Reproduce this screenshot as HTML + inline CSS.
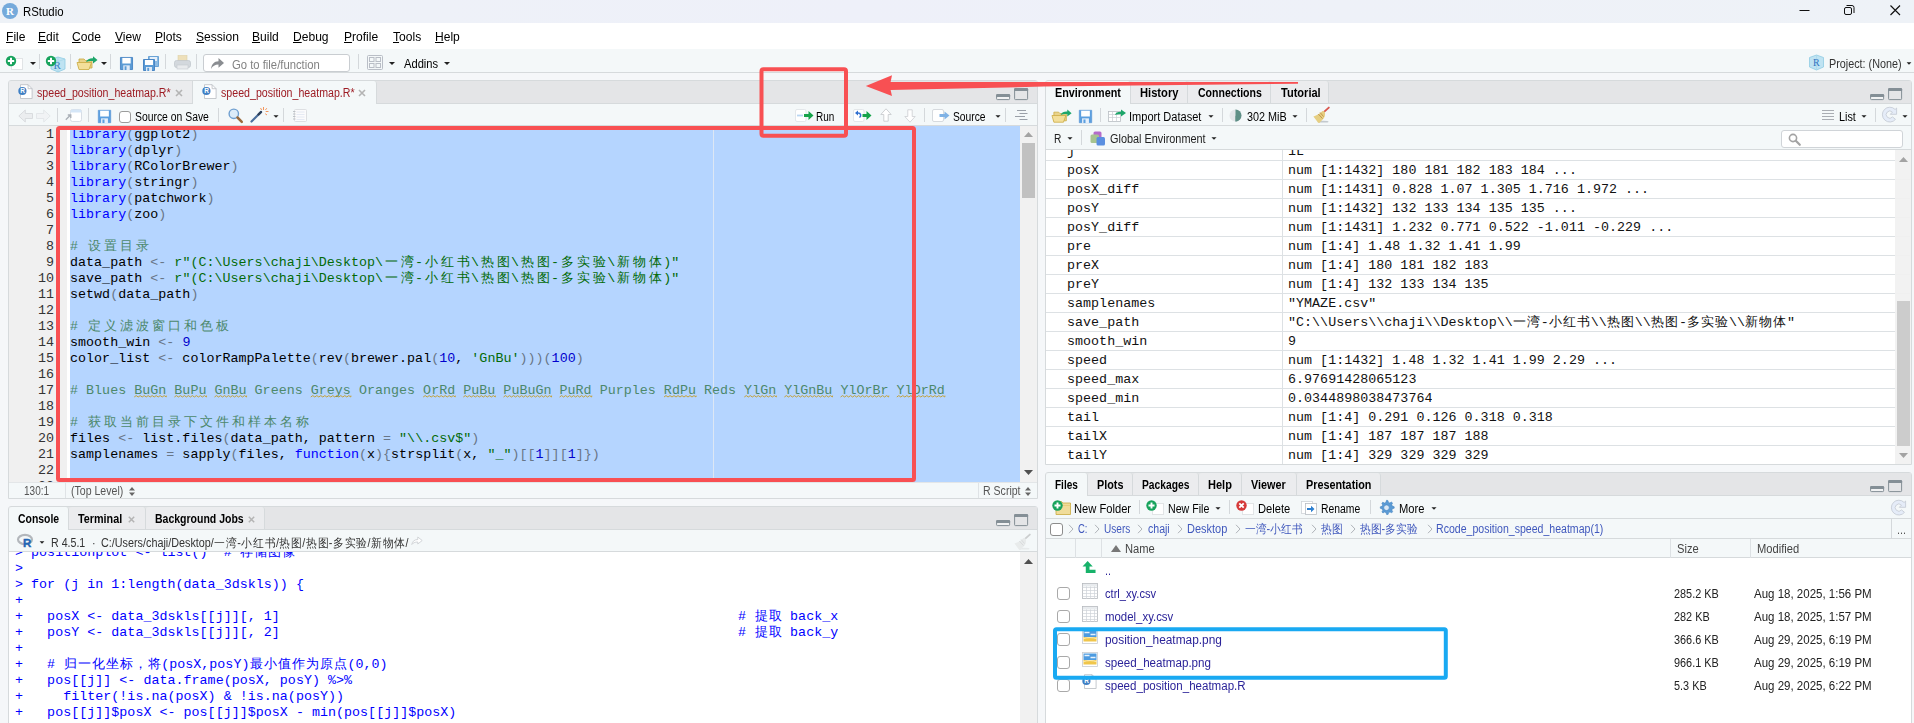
<!DOCTYPE html>
<html lang="en">
<head>
<meta charset="utf-8">
<title>RStudio</title>
<style>
*{box-sizing:border-box;margin:0;padding:0}
html,body{width:1914px;height:723px;overflow:hidden;background:#f5f7f9}
body{position:relative;font-family:"Liberation Sans",sans-serif;font-size:12px;color:#000}
.a{position:absolute}
.t{position:absolute;white-space:pre;font-family:"Liberation Sans",sans-serif;font-size:12px;line-height:14px;height:14px;transform-origin:0 50%;transform:scaleX(.9)}
.b{font-weight:700}
.m{font-size:13.33px;line-height:16px;height:16px;transform:scaleX(.905)}
.m u{text-decoration:underline;text-underline-offset:1px}
.sep{position:absolute;width:1px;background:#d4d8db}
.pane{position:absolute;background:#fff;border:1px solid #d6dadc;border-radius:3px 3px 0 0;overflow:hidden}
.tabbar{position:absolute;left:0;right:0;top:0;background:#e4e5e7;border-bottom:1px solid #d6dadc}
.tab{position:absolute;top:0;border-right:1px solid #d6dadc;background:#ebecee;border-radius:3px 3px 0 0}
.tab.on{background:#f4f8f9;border-bottom:0}
.tb{position:absolute;left:0;right:0;background:#f4f8f9;border-bottom:1px solid #d6dadc}
.code{position:absolute;font-family:"Liberation Mono",monospace;font-size:13.33px;line-height:16px;white-space:pre;color:#000;letter-spacing:.027px}
.code div{height:16px;overflow:hidden}
.c{font-style:normal;display:inline-block;width:16px;height:16px;line-height:16px;vertical-align:top;text-align:center;overflow:hidden;font-size:13px}
.c2{width:14px}.c4{width:12px;height:14px;line-height:14px;font-size:12px}.c3{width:13px;height:14px;line-height:14px;font-size:12px}
.k{color:#0000ff}.s{color:#036a07}.n{color:#0000cd}.o{color:#687687}.cm{color:#4c886b}
.ar{position:absolute;width:0;height:0;border-left:3px solid transparent;border-right:3px solid transparent;border-top:3.5px solid #222}
svg{position:absolute;overflow:visible}
</style>
</head>
<body>

<!-- ===== title bar ===== -->
<div class="a" style="left:0;top:0;width:1914px;height:23px;background:linear-gradient(90deg,#eef2f7,#eef0f9 45%,#eef1f8 70%,#eef2f7)"></div>
<div class="a" style="left:2px;top:3px;width:16px;height:16px;border-radius:50%;background:#75aadb"></div>
<div class="a" style="left:2px;top:3px;width:16px;height:16px;line-height:16px;text-align:center;color:#fff;font-family:'Liberation Serif',serif;font-size:11px;font-weight:700">R</div>
<div class="t" style="left:23px;top:5px;transform:scaleX(.95)">RStudio</div>
<svg style="left:1795px;top:0" width="119" height="23" viewBox="0 0 119 23" fill="none" stroke="#111" stroke-width="1">
<path d="M4.5 10.5h10"/>
<rect x="49.5" y="7.5" width="7" height="7" rx="1.5"/><path d="M51.5 5.5h5.5a2 2 0 0 1 2 2v5.5"/>
<path d="M95.5 5.5l9.5 9.5M105 5.5l-9.5 9.5" stroke-width="1.15"/>
</svg>

<!-- ===== menu bar ===== -->
<div class="a" style="left:0;top:23px;width:1914px;height:26px;background:#fff"></div>
<div class="t m" style="left:6px;top:29px"><u>F</u>ile</div>
<div class="t m" style="left:38px;top:29px"><u>E</u>dit</div>
<div class="t m" style="left:72px;top:29px"><u>C</u>ode</div>
<div class="t m" style="left:115px;top:29px"><u>V</u>iew</div>
<div class="t m" style="left:155px;top:29px"><u>P</u>lots</div>
<div class="t m" style="left:196px;top:29px"><u>S</u>ession</div>
<div class="t m" style="left:252px;top:29px"><u>B</u>uild</div>
<div class="t m" style="left:293px;top:29px"><u>D</u>ebug</div>
<div class="t m" style="left:344px;top:29px"><u>P</u>rofile</div>
<div class="t m" style="left:393px;top:29px"><u>T</u>ools</div>
<div class="t m" style="left:435px;top:29px"><u>H</u>elp</div>

<!-- ===== main toolbar ===== -->
<div class="a" style="left:0;top:49px;width:1914px;height:24px;background:#f4f8f9;border-bottom:1px solid #d6dadc"></div>
<!-- new file -->
<svg style="left:5px;top:55px" width="20" height="16" viewBox="0 0 20 16">
<rect x="6.5" y="3.5" width="11" height="11" fill="#fff" stroke="#e1e4e6"/>
<circle cx="6" cy="6" r="5.2" fill="#17a35c"/><path d="M6 2.8v6.4M2.8 6h6.4" stroke="#fff" stroke-width="2"/>
</svg>
<div class="ar" style="left:30px;top:62px"></div>
<div class="sep" style="left:39px;top:54px;height:15px"></div>
<!-- new project -->
<svg style="left:45px;top:55px" width="22" height="18" viewBox="0 0 22 18">
<path d="M6 4l7-2 7 2v10l-7 3-7-3z" fill="#bfe3f2" stroke="#8fcbe3" stroke-width=".8"/><path d="M13 2v15M6 4l7 2.5 7-2.5" stroke="#9fd3e8" stroke-width=".6" fill="none"/>
<text x="8.6" y="13.5" font-family="Liberation Serif" font-size="11" fill="#3b7fc4">R</text>
<circle cx="6" cy="6" r="5.2" fill="#17a35c"/><path d="M6 2.8v6.4M2.8 6h6.4" stroke="#fff" stroke-width="2"/>
</svg>
<div class="sep" style="left:70px;top:54px;height:15px"></div>
<!-- open folder -->
<svg style="left:76px;top:55px" width="24" height="16" viewBox="0 0 24 16">
<path d="M3 4h5l1.5 1.5H16V13H3z" fill="#e9d38a" stroke="#c9a93f" stroke-width=".8"/>
<path d="M1 7.5h14.5L13 14.5H3z" fill="#f3df9a" stroke="#c9a93f" stroke-width=".8"/>
<path d="M10 7c1-3 4-4 7-3.8V1.2L21.5 5 17 8.5V6c-2.5-.3-5 0-7 1z" fill="#1da66a"/>
</svg>
<div class="ar" style="left:101px;top:62px"></div>
<div class="sep" style="left:110px;top:54px;height:15px"></div>
<!-- save -->
<svg style="left:120px;top:57px" width="13" height="13" viewBox="0 0 14 14">
<path d="M.5.5h13v13H.5z" fill="#5b9bd5" stroke="#4a86c5"/><rect x="2.5" y="1" width="9" height="6" fill="#fff"/><rect x="3.5" y="9" width="7" height="5" fill="#dfeaf7"/><rect x="5" y="10" width="2" height="4" fill="#5b9bd5"/>
</svg>
<!-- save all -->
<svg style="left:143px;top:56px" width="17" height="15" viewBox="0 0 17 15">
<path d="M5.5.5h10v10h-10z" fill="#8dbbe3" stroke="#6aa3d6"/><rect x="7" y="1" width="7" height="4" fill="#e6f0fa"/>
<path d="M.5 3.5h11v11H.5z" fill="#5b9bd5" stroke="#4a86c5"/><rect x="2" y="4" width="8" height="5" fill="#fff"/><rect x="3" y="11" width="6" height="4" fill="#dfeaf7"/><rect x="4.3" y="11.8" width="1.8" height="3.2" fill="#5b9bd5"/>
</svg>
<div class="sep" style="left:165px;top:54px;height:15px"></div>
<!-- print (disabled) -->
<svg style="left:174px;top:55px" width="17" height="15" viewBox="0 0 17 15" opacity=".75">
<rect x="4" y=".5" width="9" height="6" fill="#ecd9a6" stroke="#d8c48c" stroke-width=".6"/>
<rect x=".5" y="5.5" width="16" height="7" rx="2" fill="#c9ced4" stroke="#aeb4bb" stroke-width=".7"/>
<rect x="3" y="10" width="11" height="4" fill="#e4e7ea" stroke="#b4bac0" stroke-width=".6"/>
</svg>
<div class="sep" style="left:196px;top:54px;height:15px"></div>
<!-- goto box -->
<div class="a" style="left:203px;top:54px;width:147px;height:18px;background:#fff;border:1px solid #c9cdd1;border-radius:3px"></div>
<svg style="left:210px;top:57px" width="15" height="13" viewBox="0 0 15 12" preserveAspectRatio="none"><path d="M1 11c.5-4 3-7 7.5-7V1L14 5.5 8.500 10V7C5 7 2.500 8.500 1 11z" fill="#8a8d91"/></svg>
<div class="t" style="left:232px;top:57.5px;color:#828282;transform:scaleX(.94)">Go to file/function</div>
<div class="sep" style="left:358px;top:54px;height:15px"></div>
<!-- grid icon -->
<svg style="left:367px;top:55px" width="16" height="15" viewBox="0 0 16 15" fill="none" stroke="#b9bec6">
<rect x=".5" y=".5" width="15" height="14" rx="1"/><rect x="2.500" y="2.500" width="4.500" height="4" /><rect x="9" y="2.500" width="4.500" height="4"/><rect x="2.500" y="8.500" width="4.500" height="4"/><rect x="9" y="8.500" width="4.500" height="4"/>
</svg>
<div class="ar" style="left:389px;top:62px"></div>
<div class="t" style="left:404px;top:57px;transform:scaleX(.93)">Addins</div>
<div class="ar" style="left:444px;top:62px"></div>
<!-- project -->
<svg style="left:1808px;top:54px" width="17" height="17" viewBox="0 0 17 17">
<path d="M1.500 3.500l7-2.500 7 2.500v9.500l-7 3-7-3z" fill="#bfe3f2" stroke="#8fcbe3" stroke-width=".8"/><path d="M8.500 1v15" stroke="#a5d6ea" stroke-width=".6"/>
<text x="5" y="12" font-family="Liberation Serif" font-size="10" fill="#2f74c0">R</text>
</svg>
<div class="t" style="left:1829px;top:57px;color:#333;transform:scaleX(.9)">Project: (None)</div>
<div class="ar" style="left:1906px;top:62px;transform:scale(.8)"></div>


<!-- ===== SOURCE PANE ===== -->
<div class="pane" style="left:8px;top:80px;width:1030px;height:419px"></div>
<div class="a" style="left:9px;top:81px;width:1028px;height:23px;background:#e4e5e7;border-bottom:1px solid #d6dadc"></div>
<div class="a" style="left:9px;top:81px;width:184px;height:22px;background:#ebecee;border-right:1px solid #d6dadc;border-radius:3px 0 0 0"></div>
<div class="a" style="left:193px;top:81px;width:184px;height:23px;background:#f4f8f9;border-right:1px solid #d6dadc;border-radius:0 3px 0 0"></div>
<!-- tab icons -->
<svg style="left:18px;top:84px" width="15" height="15" viewBox="0 0 15 15"><path d="M2.500.700h7.600l4 4v9.800H2.500z" fill="#fff" stroke="#b9bdc2" stroke-width=".8"/><path d="M10.100.700v4h4" fill="none" stroke="#b9bdc2" stroke-width=".8"/><circle cx="4.400" cy="7" r="4.100" fill="#3f7fc4"/><text x="2.300" y="9.300" font-family="Liberation Sans" font-weight="700" font-size="6.500" fill="#fff">R</text></svg>
<div class="t" style="left:37px;top:86px;color:#9d1c24;transform:scaleX(.886)">speed_position_heatmap.R*</div>
<svg style="left:175px;top:89px" width="8" height="8" viewBox="0 0 8 8"><path d="M1 1l6 6M7 1l-6 6" stroke="#b4b4b4" stroke-width="1.600"/></svg>
<svg style="left:202px;top:84px" width="15" height="15" viewBox="0 0 15 15"><path d="M2.500.700h7.600l4 4v9.800H2.500z" fill="#fff" stroke="#b9bdc2" stroke-width=".8"/><path d="M10.100.700v4h4" fill="none" stroke="#b9bdc2" stroke-width=".8"/><circle cx="4.400" cy="7" r="4.100" fill="#3f7fc4"/><text x="2.300" y="9.300" font-family="Liberation Sans" font-weight="700" font-size="6.500" fill="#fff">R</text></svg>
<div class="t" style="left:221px;top:86px;color:#9d1c24;transform:scaleX(.886)">speed_position_heatmap.R*</div>
<svg style="left:358px;top:89px" width="8" height="8" viewBox="0 0 8 8"><path d="M1 1l6 6M7 1l-6 6" stroke="#b4b4b4" stroke-width="1.600"/></svg>
<!-- min/max -->
<svg style="left:996px;top:88px" width="33" height="13" viewBox="0 0 33 13"><rect x=".6" y="6.600" width="13" height="5" rx=".8" fill="#f1f2f3" stroke="#848f96" stroke-width="1"/><path d="M.1 9V7.200a1.200 1.200 0 0 1 1.200-1.200h11.600a1.200 1.200 0 0 1 1.200 1.200V9z" fill="#848f96"/><rect x="18.600" y=".6" width="13" height="11" rx=".8" fill="none" stroke="#848f96" stroke-width="1"/><path d="M18.100 2.900V1.300a1.200 1.200 0 0 1 1.200-1.200h11.600a1.200 1.200 0 0 1 1.200 1.200V2.900z" fill="#848f96"/></svg>

<!-- editor toolbar -->
<div class="a" style="left:9px;top:104px;width:1028px;height:22px;background:#f4f8f9;border-bottom:1px solid #d6dadc"></div>
<svg style="left:18px;top:109px" width="33" height="14" viewBox="0 0 33 14"><path d="M.8 7l6.500-6v3.500h7.200v5H7.300V13z" fill="#ebedef" stroke="#d3d6d9" stroke-width=".8"/><path d="M32.200 7l-6.500-6v3.500h-7.200v5h7.200V13z" fill="#f1f3f5" stroke="#e0e3e6" stroke-width=".8"/></svg>
<div class="sep" style="left:57px;top:108px;height:14px"></div>
<svg style="left:65px;top:109px" width="17" height="13" viewBox="0 0 17 13"><rect x="5.500" y=".5" width="11" height="12" rx="2" fill="#fff" stroke="#cfd6de" stroke-width=".8"/><path d="M5.500 3.500V2.500a2 2 0 0 1 2-2h7a2 2 0 0 1 2 2v1z" fill="#d5e6f7"/><path d="M.8 10.800l4.500-4.500M2.800 6h3v3" fill="none" stroke="#a9afb6" stroke-width="1.300"/></svg>
<div class="sep" style="left:88px;top:108px;height:14px"></div>
<svg style="left:98px;top:110px" width="13" height="13" viewBox="0 0 14 14"><path d="M.3.3h13.400v13.400H.3z" fill="#5c9fdf" stroke="#4d8fd2" stroke-width=".6"/><rect x="2.300" y=".8" width="9.400" height="6.200" fill="#fff"/><rect x="3.300" y="9" width="7.400" height="5" fill="#e6f0fb"/><rect x="4.800" y="10.200" width="2.200" height="3.800" fill="#5c9fdf"/></svg>
<div class="a" style="left:119px;top:111px;width:12px;height:12px;background:#fff;border:1px solid #9c9c9c;border-radius:3px"></div>
<div class="t" style="left:135px;top:110px;transform:scaleX(.865)">Source on Save</div>
<div class="sep" style="left:218px;top:108px;height:14px"></div>
<svg style="left:228px;top:108px" width="15" height="15" viewBox="0 0 15 15"><circle cx="5.800" cy="5.800" r="4.700" fill="#dcecf9" stroke="#6f9fd0" stroke-width="1.400"/><path d="M9.500 9.500l4.300 4.300" stroke="#9a6a3c" stroke-width="2.500" stroke-linecap="round"/></svg>
<svg style="left:250px;top:107px" width="19" height="16" viewBox="0 0 19 16"><path d="M1.500 14.500L11 5" stroke="#4a6e9c" stroke-width="2.200" stroke-linecap="round"/><path d="M8.500 7.500L11 5" stroke="#2d3f58" stroke-width="2.400" stroke-linecap="round"/><path d="M13.500 0v3M10.500 1l1.200 2M16.800 1.200l-1.400 1.800M18.500 4.500h-2.800M17 8l-1.800-1.300" stroke="#f28a4b" stroke-width=".9"/></svg>
<div class="ar" style="left:273px;top:115px;transform:scale(.85)"></div>
<div class="sep" style="left:283px;top:108px;height:14px"></div>
<svg style="left:293px;top:109px" width="14" height="13" viewBox="0 0 14 13"><rect x="1.500" y=".5" width="12" height="12" rx="1" fill="#fbfbfc" stroke="#d5d8dc" stroke-width=".8"/><path d="M3.500 3h8M3.500 5.500h8M3.500 8h8M3.500 10.500h8" stroke="#dfe6f1" stroke-width=".8"/><path d="M0 2.500h2.500M0 5h2.500M0 7.500h2.500M0 10h2.500" stroke="#b9bdc3" stroke-width=".9"/></svg>
<!-- run group -->
<svg style="left:795px;top:109px" width="19" height="13" viewBox="0 0 19 13"><rect x=".5" y=".5" width="10.500" height="12" rx="1.500" fill="#fff" stroke="#dde1e5" stroke-width=".8"/><path d="M2 6.500h6" stroke="#b9d6f2" stroke-width="1.800"/><path d="M9 5h4.500V2L18.500 6.500 13.500 11V8H9z" fill="#16a34a"/></svg>
<div class="t" style="left:816px;top:110px;transform:scaleX(.83)">Run</div>
<svg style="left:853px;top:109px" width="19" height="13" viewBox="0 0 19 13"><rect x=".5" y=".5" width="10.500" height="12" rx="1.500" fill="#fff" stroke="#dde1e5" stroke-width=".8"/><path d="M6.500 8.500c2-1.500 1.500-4.500-1.500-4.500H3.500" fill="none" stroke="#2e6fd0" stroke-width="1.500"/><path d="M5 1.500L2 4l3 2.500z" fill="#2e6fd0"/><path d="M9.500 5h4V2L18.500 6.500 13.500 11V8h-4z" fill="#16a34a"/></svg>
<svg style="left:880px;top:108px" width="37" height="15" viewBox="0 0 37 15"><path d="M6 .8l5.200 5.700H8.200v6.700H3.800V6.500H.8z" fill="#fff" stroke="#c9cccf" stroke-width=".9"/><path d="M30 14.200l5.200-5.700h-3V1.800h-4.400v6.700h-3z" fill="#fff" stroke="#d0d3d6" stroke-width=".9"/></svg>
<div class="sep" style="left:924px;top:108px;height:14px"></div>
<svg style="left:932px;top:109px" width="18" height="13" viewBox="0 0 18 13"><rect x=".5" y=".5" width="11" height="12" rx="1.500" fill="#fff" stroke="#cdd1d5" stroke-width=".8"/><path d="M7.500 5h5V2.500L17.500 6.500 12.500 10.500V8h-5z" fill="#7fb2e5"/></svg>
<div class="t" style="left:953px;top:110px;transform:scaleX(.857)">Source</div>
<div class="ar" style="left:995px;top:115px;transform:scale(.85)"></div>
<div class="sep" style="left:1005px;top:108px;height:14px"></div>
<svg style="left:1015px;top:110px" width="13" height="10" viewBox="0 0 13 10"><path d="M2 .5h9M4.500 3.500h8M0 6.500h10M4.500 9.500h8" stroke="#9aa0a8" stroke-width="1"/></svg>
<!-- editor -->
<div class="a" style="left:9px;top:126px;width:1028px;height:356px;background:#fff;overflow:hidden">
<div class="a" style="left:0;top:0;width:58px;height:356px;background:#f0f0f0"></div>
<div class="a" style="left:61px;top:0;width:950px;height:356px;background:#b5d5ff"></div>
<div class="a" style="left:704px;top:0;width:1px;height:356px;background:#e4eaf2;opacity:.85"></div>
<div class="code" style="left:0;top:1px;width:45px;text-align:right;color:#333"><div>1</div><div>2</div><div>3</div><div>4</div><div>5</div><div>6</div><div>7</div><div>8</div><div>9</div><div>10</div><div>11</div><div>12</div><div>13</div><div>14</div><div>15</div><div>16</div><div>17</div><div>18</div><div>19</div><div>20</div><div>21</div><div>22</div><div>23</div></div>
<div class="code" style="left:61px;top:1px"><div><span class="k">library</span><span class="o">(</span>ggplot2<span class="o">)</span></div><div><span class="k">library</span><span class="o">(</span>dplyr<span class="o">)</span></div><div><span class="k">library</span><span class="o">(</span>RColorBrewer<span class="o">)</span></div><div><span class="k">library</span><span class="o">(</span>stringr<span class="o">)</span></div><div><span class="k">library</span><span class="o">(</span>patchwork<span class="o">)</span></div><div><span class="k">library</span><span class="o">(</span>zoo<span class="o">)</span></div><div></div><div><span class="cm"># <i class="c">设</i><i class="c">置</i><i class="c">目</i><i class="c">录</i></span></div><div>data_path <span class="o">&lt;-</span> <span class="s">r"(C:\Users\chaji\Desktop\<i class="c">一</i><i class="c">湾</i>-<i class="c">小</i><i class="c">红</i><i class="c">书</i>\<i class="c">热</i><i class="c">图</i>\<i class="c">热</i><i class="c">图</i>-<i class="c">多</i><i class="c">实</i><i class="c">验</i>\<i class="c">新</i><i class="c">物</i><i class="c">体</i>)"</span></div><div>save_path <span class="o">&lt;-</span> <span class="s">r"(C:\Users\chaji\Desktop\<i class="c">一</i><i class="c">湾</i>-<i class="c">小</i><i class="c">红</i><i class="c">书</i>\<i class="c">热</i><i class="c">图</i>\<i class="c">热</i><i class="c">图</i>-<i class="c">多</i><i class="c">实</i><i class="c">验</i>\<i class="c">新</i><i class="c">物</i><i class="c">体</i>)"</span></div><div>setwd<span class="o">(</span>data_path<span class="o">)</span></div><div></div><div><span class="cm"># <i class="c">定</i><i class="c">义</i><i class="c">滤</i><i class="c">波</i><i class="c">窗</i><i class="c">口</i><i class="c">和</i><i class="c">色</i><i class="c">板</i></span></div><div>smooth_win <span class="o">&lt;-</span> <span class="n">9</span></div><div>color_list <span class="o">&lt;-</span> colorRampPalette<span class="o">(</span>rev<span class="o">(</span>brewer.pal<span class="o">(</span><span class="n">10</span>, <span class="s">'GnBu'</span><span class="o">)))(</span><span class="n">100</span><span class="o">)</span></div><div></div><div><span class="cm"># Blues BuGn BuPu GnBu Greens Greys Oranges OrRd PuBu PuBuGn PuRd Purples RdPu Reds YlGn YlGnBu YlOrBr YlOrRd</span></div><div></div><div><span class="cm"># <i class="c">获</i><i class="c">取</i><i class="c">当</i><i class="c">前</i><i class="c">目</i><i class="c">录</i><i class="c">下</i><i class="c">文</i><i class="c">件</i><i class="c">和</i><i class="c">样</i><i class="c">本</i><i class="c">名</i><i class="c">称</i></span></div><div>files <span class="o">&lt;-</span> list.files<span class="o">(</span>data_path, pattern <span class="o">=</span> <span class="s">"\\.csv$"</span><span class="o">)</span></div><div>samplenames <span class="o">=</span> sapply<span class="o">(</span>files, <span class="k">function</span><span class="o">(</span>x<span class="o">){</span>strsplit<span class="o">(</span>x, <span class="s">"_"</span><span class="o">)[[</span><span class="n">1</span><span class="o">]][</span><span class="n">1</span><span class="o">]})</span></div><div></div><div></div></div>
<svg style="left:0;top:0" width="1028" height="356" viewBox="0 0 1028 356"><path d="M125.2 271L127.2 269.6L129.2 271L131.2 269.6L133.2 271L135.2 269.6L137.2 271L139.2 269.6L141.2 271L143.2 269.6L145.2 271L147.2 269.6L149.2 271L151.2 269.6L153.2 271L155.2 269.6L157.2 271L157.3 269.6M165.4 271L167.4 269.6L169.4 271L171.4 269.6L173.4 271L175.4 269.6L177.4 271L179.4 269.6L181.4 271L183.4 269.6L185.4 271L187.4 269.6L189.4 271L191.4 269.6L193.4 271L195.4 269.6L197.4 271L197.5 269.6M205.5 271L207.5 269.6L209.5 271L211.5 269.6L213.5 271L215.5 269.6L217.5 271L219.5 269.6L221.5 271L223.5 269.6L225.5 271L227.5 269.6L229.5 271L231.5 269.6L233.5 271L235.5 269.6L237.5 271L237.6 269.6M301.8 271L303.8 269.6L305.8 271L307.8 269.6L309.8 271L311.8 269.6L313.8 271L315.8 269.6L317.8 271L319.8 269.6L321.8 271L323.8 269.6L325.8 271L327.8 269.6L329.8 271L331.8 269.6L333.8 271L335.8 269.6L337.8 271L339.8 269.6L341.8 271L341.9 269.6M414.2 271L416.2 269.6L418.2 271L420.2 269.6L422.2 271L424.2 269.6L426.2 271L428.2 269.6L430.2 271L432.2 269.6L434.2 271L436.2 269.6L438.2 271L440.2 269.6L442.2 271L444.2 269.6L446.2 271L446.3 269.6M454.3 271L456.3 269.6L458.3 271L460.3 269.6L462.3 271L464.3 269.6L466.3 271L468.3 269.6L470.3 271L472.3 269.6L474.3 271L476.3 269.6L478.3 271L480.3 269.6L482.3 271L484.3 269.6L486.3 271L486.4 269.6M494.5 271L496.5 269.6L498.5 271L500.5 269.6L502.5 271L504.5 269.6L506.5 271L508.5 269.6L510.5 271L512.5 269.6L514.5 271L516.5 269.6L518.5 271L520.5 269.6L522.5 271L524.5 269.6L526.5 271L528.5 269.6L530.5 271L532.5 269.6L534.5 271L536.5 269.6L538.5 271L540.5 269.6L542.5 271L542.6 269.6M550.6 271L552.6 269.6L554.6 271L556.6 269.6L558.6 271L560.6 269.6L562.6 271L564.6 269.6L566.6 271L568.6 269.6L570.6 271L572.6 269.6L574.6 271L576.6 269.6L578.6 271L580.6 269.6L582.6 271L582.8 269.6M655.0 271L657.0 269.6L659.0 271L661.0 269.6L663.0 271L665.0 269.6L667.0 271L669.0 269.6L671.0 271L673.0 269.6L675.0 271L677.0 269.6L679.0 271L681.0 269.6L683.0 271L685.0 269.6L687.0 271L687.1 269.6M735.3 271L737.3 269.6L739.3 271L741.3 269.6L743.3 271L745.3 269.6L747.3 271L749.3 269.6L751.3 271L753.3 269.6L755.3 271L757.3 269.6L759.3 271L761.3 269.6L763.3 271L765.3 269.6L767.3 271L767.4 269.6M775.4 271L777.4 269.6L779.4 271L781.4 269.6L783.4 271L785.4 269.6L787.4 271L789.4 269.6L791.4 271L793.4 269.6L795.4 271L797.4 269.6L799.4 271L801.4 269.6L803.4 271L805.4 269.6L807.4 271L809.4 269.6L811.4 271L813.4 269.6L815.4 271L817.4 269.6L819.4 271L821.4 269.6L823.4 271L823.6 269.6M831.6 271L833.6 269.6L835.6 271L837.6 269.6L839.6 271L841.6 269.6L843.6 271L845.6 269.6L847.6 271L849.6 269.6L851.6 271L853.6 269.6L855.6 271L857.6 269.6L859.6 271L861.6 269.6L863.6 271L865.6 269.6L867.6 271L869.6 269.6L871.6 271L873.6 269.6L875.6 271L877.6 269.6L879.6 271L879.8 269.6M887.8 271L889.8 269.6L891.8 271L893.8 269.6L895.8 271L897.8 269.6L899.8 271L901.8 269.6L903.8 271L905.8 269.6L907.8 271L909.8 269.6L911.8 271L913.8 269.6L915.8 271L917.8 269.6L919.8 271L921.8 269.6L923.8 271L925.8 269.6L927.8 271L929.8 269.6L931.8 271L933.8 269.6L935.8 271L935.9 269.6" fill="none" stroke="#c4a23a" stroke-width="1" stroke-linejoin="round"/></svg>
<div class="a" style="left:1011px;top:0;width:17px;height:356px;background:#f1f1f1"></div>
<div class="a" style="left:1013px;top:17px;width:13px;height:55px;background:#c1c1c1"></div>
<svg style="left:1015px;top:6px" width="9" height="5" viewBox="0 0 9 5"><path d="M0 5L4.500 0 9 5z" fill="#a3a3a3"/></svg>
<svg style="left:1015px;top:344px" width="9" height="5" viewBox="0 0 9 5"><path d="M0 0L4.500 5 9 0z" fill="#505050"/></svg>
</div>
<div class="a" style="left:9px;top:482px;width:1028px;height:16px;background:#f4f8f9;border-top:1px solid #e3e6e8"></div>
<div class="t" style="left:24px;top:484px;color:#555;transform:scaleX(.835)">130:1</div>
<div class="sep" style="left:65px;top:483px;height:15px;background:#dfe3e6"></div>
<div class="t" style="left:71px;top:484px;color:#555;transform:scaleX(.88)">(Top Level)</div>
<svg style="left:129px;top:487px" width="6" height="9" viewBox="0 0 6 9"><path d="M0 3.500L3 0l3 3.500zM0 5.500L3 9l3-3.500z" fill="#666"/></svg>
<div class="sep" style="left:978px;top:483px;height:15px;background:#dfe3e6"></div>
<div class="t" style="left:983px;top:484px;color:#555;transform:scaleX(.88)">R Script</div>
<svg style="left:1025px;top:487px" width="6" height="9" viewBox="0 0 6 9"><path d="M0 3.500L3 0l3 3.500zM0 5.500L3 9l3-3.500z" fill="#666"/></svg>
<!-- ===== CONSOLE PANE ===== -->
<div class="pane" style="left:8px;top:506px;width:1030px;height:230px"></div>
<div class="a" style="left:9px;top:507px;width:1028px;height:23px;background:#e4e5e7;border-bottom:1px solid #d6dadc"></div>
<div class="a" style="left:9px;top:507px;width:60px;height:24px;background:#f4f8f9;border-right:1px solid #d6dadc;border-radius:3px 3px 0 0"></div>
<div class="a" style="left:69px;top:507px;width:77px;height:22px;background:#ebecee;border-right:1px solid #d6dadc;border-radius:3px 3px 0 0"></div>
<div class="a" style="left:146px;top:507px;width:119px;height:22px;background:#ebecee;border-right:1px solid #d6dadc;border-radius:3px 3px 0 0"></div>
<div class="t b" style="left:18px;top:512px;transform:scaleX(.868)">Console</div>
<div class="t b" style="left:78px;top:512px;transform:scaleX(.9)">Terminal</div>
<svg style="left:128px;top:516px" width="7" height="7" viewBox="0 0 7 7"><path d="M.8.8l5.400 5.400M6.200.8L.8 6.200" stroke="#b4b4b4" stroke-width="1.500"/></svg>
<div class="t b" style="left:155px;top:512px;transform:scaleX(.875)">Background Jobs</div>
<svg style="left:248px;top:516px" width="7" height="7" viewBox="0 0 7 7"><path d="M.8.8l5.400 5.400M6.200.8L.8 6.200" stroke="#b4b4b4" stroke-width="1.500"/></svg>
<svg style="left:996px;top:514px" width="33" height="13" viewBox="0 0 33 13"><rect x=".6" y="6.600" width="13" height="5" rx=".8" fill="#f1f2f3" stroke="#848f96" stroke-width="1"/><path d="M.1 9V7.200a1.200 1.200 0 0 1 1.200-1.200h11.600a1.200 1.200 0 0 1 1.200 1.200V9z" fill="#848f96"/><rect x="18.600" y=".6" width="13" height="11" rx=".8" fill="none" stroke="#848f96" stroke-width="1"/><path d="M18.100 2.900V1.300a1.200 1.200 0 0 1 1.200-1.200h11.600a1.200 1.200 0 0 1 1.200 1.200V2.900z" fill="#848f96"/></svg>
<div class="a" style="left:9px;top:530px;width:1028px;height:22px;background:#f4f8f9;border-bottom:1px solid #d6dadc"></div>
<svg style="left:17px;top:534px" width="18" height="14" viewBox="0 0 18 14"><ellipse cx="8" cy="5.500" rx="7" ry="4.600" fill="none" stroke="#b3b7bc" stroke-width="2.200"/><text x="6" y="13.200" font-family="Liberation Sans" font-weight="700" font-size="11.500" fill="#2265b5" stroke="#2265b5" stroke-width=".4">R</text></svg>
<div class="ar" style="left:39px;top:541px;transform:scale(.8)"></div>
<div class="t" style="left:51px;top:536px;color:#333;transform:scaleX(.886)">R 4.5.1</div>
<div class="t" style="left:92px;top:536px;color:#333">·</div>
<div class="t s2" style="left:101px;top:536px;color:#333;transform:scaleX(.9)">C:/Users/chaji/Desktop/<i class="c c3">一</i><i class="c c3">湾</i>-<i class="c c3">小</i><i class="c c3">红</i><i class="c c3">书</i>/<i class="c c3">热</i><i class="c c3">图</i>/<i class="c c3">热</i><i class="c c3">图</i>-<i class="c c3">多</i><i class="c c3">实</i><i class="c c3">验</i>/<i class="c c3">新</i><i class="c c3">物</i><i class="c c3">体</i>/</div>
<svg style="left:411px;top:536px" width="12" height="9" viewBox="0 0 12 9"><path d="M.8 8.500c.5-3 2.500-5 6-5V1L11.200 4.500 6.800 8V6C4 6 2 6.800.8 8.500z" fill="#fff" stroke="#cdd0d4" stroke-width=".9"/></svg>
<svg style="left:1007px;top:529px;filter:grayscale(1)" width="30" height="26" viewBox="0 0 30 26" opacity=".3"><ellipse cx="17" cy="19.700" rx="5.500" ry=".9" fill="#9aa3ab" opacity=".55"/><path d="M22.800 5.600L18.300 9.600" stroke="#d9564f" stroke-width="1.900" stroke-linecap="round"/><path d="M16.200 9.200c1.200-.6 2.600.2 2.800 1.600.3 2-.2 4-1.200 5.400L13.300 20.900c-.5.2-1-.2-1.500-.7L7.400 14.600c3.500-1.200 6.800-3.200 8.800-5.400z" fill="#e6cf82"/><path d="M14 10.400l3.600 4.200M12.300 12l4.200 4.600" stroke="#b98a3c" stroke-width=".8"/></svg>
<div class="a" style="left:9px;top:552px;width:1028px;height:171px;background:#fff;overflow:hidden">
<div class="code" style="left:6px;top:-7px;color:#0000ff"><div>&gt; positionplot &lt;- list()  # <i class="c c2">存</i><i class="c c2">储</i><i class="c c2">图</i><i class="c c2">像</i></div><div>&gt; </div><div>&gt; for (j in 1:length(data_3dskls)) {</div><div>+ </div><div>+   posX &lt;- data_3dskls[[j]][, 1]</div><div>+   posY &lt;- data_3dskls[[j]][, 2]</div><div>+ </div><div>+   # <i class="c c2">归</i><i class="c c2">一</i><i class="c c2">化</i><i class="c c2">坐</i><i class="c c2">标</i><i class="c c2">，</i><i class="c c2">将</i>(posX,posY)<i class="c c2">最</i><i class="c c2">小</i><i class="c c2">值</i><i class="c c2">作</i><i class="c c2">为</i><i class="c c2">原</i><i class="c c2">点</i>(0,0)</div><div>+   pos[[j]] &lt;- data.frame(posX, posY) %&gt;%</div><div>+     filter(!is.na(posX) &amp; !is.na(posY))</div><div>+   pos[[j]]$posX &lt;- pos[[j]]$posX - min(pos[[j]]$posX)</div><div>+   pos[[j]]$posY &lt;- pos[[j]]$posY - min(pos[[j]]$posY)</div></div>
<div class="code" style="left:729px;top:57px;color:#0000ff"><div># <i class="c c2">提</i><i class="c c2">取</i> back_x</div><div># <i class="c c2">提</i><i class="c c2">取</i> back_y</div></div>
<div class="a" style="left:1011px;top:0;width:17px;height:171px;background:#f1f1f1"></div>
<svg style="left:1015px;top:7px" width="9" height="5" viewBox="0 0 9 5"><path d="M0 5L4.500 0 9 5z" fill="#505050"/></svg>
</div>
<!-- ===== ENVIRONMENT PANE ===== -->
<div class="pane" style="left:1045px;top:80px;width:867px;height:385px"></div>
<div class="a" style="left:1046px;top:81px;width:865px;height:23px;background:#e4e5e7;border-bottom:1px solid #d6dadc"></div>
<div class="a" style="left:1046px;top:81px;width:85px;height:23px;background:#f4f8f9;border-right:1px solid #d6dadc;border-radius:3px 3px 0 0"></div>
<div class="t b" style="left:1055px;top:86px;transform:scaleX(0.898)">Environment</div>
<div class="a" style="left:1131px;top:81px;width:57px;height:22px;background:#ebecee;border-right:1px solid #d6dadc;border-radius:3px 3px 0 0"></div>
<div class="t b" style="left:1140px;top:86px;transform:scaleX(0.93)">History</div>
<div class="a" style="left:1188px;top:81px;width:83px;height:22px;background:#ebecee;border-right:1px solid #d6dadc;border-radius:3px 3px 0 0"></div>
<div class="t b" style="left:1197.5px;top:86px;transform:scaleX(0.878)">Connections</div>
<div class="a" style="left:1271px;top:81px;width:58px;height:22px;background:#ebecee;border-right:1px solid #d6dadc;border-radius:3px 3px 0 0"></div>
<div class="t b" style="left:1280.5px;top:86px;transform:scaleX(0.92)">Tutorial</div>
<svg style="left:1870px;top:88px" width="33" height="13" viewBox="0 0 33 13"><rect x=".6" y="6.600" width="13" height="5" rx=".8" fill="#f1f2f3" stroke="#848f96" stroke-width="1"/><path d="M.1 9V7.200a1.200 1.200 0 0 1 1.200-1.200h11.600a1.200 1.200 0 0 1 1.200 1.200V9z" fill="#848f96"/><rect x="18.600" y=".6" width="13" height="11" rx=".8" fill="none" stroke="#848f96" stroke-width="1"/><path d="M18.100 2.900V1.300a1.200 1.200 0 0 1 1.200-1.200h11.600a1.200 1.200 0 0 1 1.200 1.200V2.900z" fill="#848f96"/></svg>
<div class="a" style="left:1046px;top:104px;width:865px;height:22px;background:#f4f8f9;border-bottom:1px solid #d6dadc"></div>
<svg style="left:1051px;top:108px" width="23" height="16" viewBox="0 0 24 16"><path d="M3 4h5l1.500 1.500H16V13H3z" fill="#e9d38a" stroke="#c9a93f" stroke-width=".8"/><path d="M1 7.500h14.500L13 14.500H3z" fill="#f3df9a" stroke="#c9a93f" stroke-width=".8"/><path d="M10 7c1-3 4-4 7-3.800V1.200L21.500 5 17 8.500V6c-2.500-.3-5 0-7 1z" fill="#1da66a"/></svg>
<svg style="left:1079px;top:110px" width="13" height="13" viewBox="0 0 14 14"><path d="M.3.3h13.400v13.400H.3z" fill="#5c9fdf" stroke="#4d8fd2" stroke-width=".6"/><rect x="2.300" y=".8" width="9.400" height="6.200" fill="#fff"/><rect x="3.300" y="9" width="7.400" height="5" fill="#e6f0fb"/><rect x="4.800" y="10.200" width="2.200" height="3.800" fill="#5c9fdf"/></svg>
<div class="sep" style="left:1100px;top:108px;height:14px"></div>
<svg style="left:1108px;top:109px" width="19" height="13" viewBox="0 0 19 13"><rect x=".5" y="2.500" width="12" height="10" fill="#fff" stroke="#b9bdc3" stroke-width=".8"/><path d="M.5 5.500h12M.5 8.500h12M4.500 2.500v10M8.500 2.500v10" stroke="#c9cdd2" stroke-width=".7"/><path d="M7 6c.8-2.500 3-3.500 6-3.300V.5L18 4l-5 3.500V5.300C10.500 5 8.500 5.300 7 6z" fill="#1da66a"/></svg>
<div class="t" style="left:1129px;top:110px;transform:scaleX(.92)">Import Dataset</div>
<div class="ar" style="left:1208px;top:115px;transform:scale(.85)"></div>
<div class="sep" style="left:1222px;top:108px;height:14px"></div>
<svg style="left:1229px;top:109px" width="13" height="13" viewBox="0 0 13 13"><circle cx="6.500" cy="6.500" r="6" fill="#e3e6e9"/><path d="M6.500 6.500V.5a6 6 0 0 1 0 12z" fill="#5e8f86"/><path d="M6.500 6.500v6a6 6 0 0 0 3-0.800z" fill="#5e8f86"/></svg>
<div class="t" style="left:1247px;top:110px;transform:scaleX(.9)">302 MiB</div>
<div class="ar" style="left:1292px;top:115px;transform:scale(.85)"></div>
<div class="sep" style="left:1306px;top:108px;height:14px"></div>
<svg style="left:1306px;top:102px" width="30" height="26" viewBox="0 0 30 26"><ellipse cx="17" cy="19.700" rx="5.500" ry=".9" fill="#9aa3ab" opacity=".55"/><path d="M22.800 5.600L18.300 9.600" stroke="#d9564f" stroke-width="1.900" stroke-linecap="round"/><path d="M16.200 9.200c1.200-.6 2.600.2 2.800 1.600.3 2-.2 4-1.200 5.400L13.300 20.900c-.5.2-1-.2-1.500-.7L7.400 14.600c3.500-1.200 6.800-3.200 8.800-5.400z" fill="#e6cf82"/><path d="M14 10.400l3.600 4.200M12.300 12l4.200 4.600" stroke="#b98a3c" stroke-width=".8"/></svg>
<svg style="left:1822px;top:110px" width="12" height="11" viewBox="0 0 12 11"><path d="M0 .5h12M0 3.500h12M0 6.500h12M0 9.500h12" stroke="#a9adb3" stroke-width="1"/></svg>
<div class="t" style="left:1839px;top:110px;transform:scaleX(.9)">List</div>
<div class="ar" style="left:1861px;top:115px;transform:scale(.85)"></div>
<div class="sep" style="left:1875px;top:108px;height:14px"></div>
<svg style="left:1876px;top:104px" width="36" height="24" viewBox="0 0 36 24"><path d="M20.600 4V10.300H14.300L16.450 8.160A3.600 3.600 0 1 0 16.560 12.910L19.470 15.360A7.400 7.400 0 1 1 19.120 5.460Z" fill="#e5ecf8" stroke="#c2c8d2" stroke-width=".8" stroke-linejoin="round"/></svg>
<div class="ar" style="left:1901.5px;top:115px;transform:scale(.85)"></div>
<div class="a" style="left:1046px;top:126px;width:865px;height:24px;background:#f4f8f9;border-bottom:1px solid #d6dadc"></div>
<div class="t" style="left:1054px;top:132px;color:#222;transform:scaleX(.85)">R</div>
<div class="ar" style="left:1067px;top:137px;transform:scale(.85)"></div>
<div class="sep" style="left:1081px;top:130px;height:15px"></div>
<svg style="left:1090px;top:131px" width="16" height="15" viewBox="0 0 16 15"><rect x="3.500" y=".5" width="8" height="8" rx="1.500" fill="#b46ccb"/><rect x=".5" y="3.500" width="8.500" height="8.500" rx="1.500" fill="#a7c48f"/><rect x="6.500" y="6" width="8.500" height="8.500" rx="1.500" fill="#5a8fe0"/></svg>
<div class="t" style="left:1109.5px;top:132px;color:#222;transform:scaleX(.907)">Global Environment</div>
<div class="ar" style="left:1211px;top:137px;transform:scale(.85)"></div>
<div class="a" style="left:1781px;top:130px;width:122px;height:18px;background:#fff;border:1px solid #d0d4d8;border-radius:3px"></div>
<svg style="left:1788px;top:133px" width="13" height="13" viewBox="0 0 13 13"><circle cx="5" cy="5" r="3.600" fill="none" stroke="#a3a3a3" stroke-width="1.600"/><path d="M7.800 7.800l4 4" stroke="#a3a3a3" stroke-width="2.200" stroke-linecap="round"/></svg>
<div class="a" style="left:1046px;top:150px;width:865px;height:314px;background:#fff;overflow:hidden">
<div class="a" style="left:0;top:-8px;width:864px;height:19px;border-bottom:1px solid #dde1e4"></div>
<div class="code" style="left:21px;top:-6px;color:#111"><div>j</div></div>
<div class="code" style="left:242px;top:-6px;color:#111"><div>1L</div></div>
<div class="a" style="left:0;top:11px;width:864px;height:19px;border-bottom:1px solid #dde1e4"></div>
<div class="code" style="left:21px;top:13px;color:#111"><div>posX</div></div>
<div class="code" style="left:242px;top:13px;color:#111"><div>num [1:1432] 180 181 182 183 184 ...</div></div>
<div class="a" style="left:0;top:30px;width:864px;height:19px;border-bottom:1px solid #dde1e4"></div>
<div class="code" style="left:21px;top:32px;color:#111"><div>posX_diff</div></div>
<div class="code" style="left:242px;top:32px;color:#111"><div>num [1:1431] 0.828 1.07 1.305 1.716 1.972 ...</div></div>
<div class="a" style="left:0;top:49px;width:864px;height:19px;border-bottom:1px solid #dde1e4"></div>
<div class="code" style="left:21px;top:51px;color:#111"><div>posY</div></div>
<div class="code" style="left:242px;top:51px;color:#111"><div>num [1:1432] 132 133 134 135 135 ...</div></div>
<div class="a" style="left:0;top:68px;width:864px;height:19px;border-bottom:1px solid #dde1e4"></div>
<div class="code" style="left:21px;top:70px;color:#111"><div>posY_diff</div></div>
<div class="code" style="left:242px;top:70px;color:#111"><div>num [1:1431] 1.232 0.771 0.522 -1.011 -0.229 ...</div></div>
<div class="a" style="left:0;top:87px;width:864px;height:19px;border-bottom:1px solid #dde1e4"></div>
<div class="code" style="left:21px;top:89px;color:#111"><div>pre</div></div>
<div class="code" style="left:242px;top:89px;color:#111"><div>num [1:4] 1.48 1.32 1.41 1.99</div></div>
<div class="a" style="left:0;top:106px;width:864px;height:19px;border-bottom:1px solid #dde1e4"></div>
<div class="code" style="left:21px;top:108px;color:#111"><div>preX</div></div>
<div class="code" style="left:242px;top:108px;color:#111"><div>num [1:4] 180 181 182 183</div></div>
<div class="a" style="left:0;top:125px;width:864px;height:19px;border-bottom:1px solid #dde1e4"></div>
<div class="code" style="left:21px;top:127px;color:#111"><div>preY</div></div>
<div class="code" style="left:242px;top:127px;color:#111"><div>num [1:4] 132 133 134 135</div></div>
<div class="a" style="left:0;top:144px;width:864px;height:19px;border-bottom:1px solid #dde1e4"></div>
<div class="code" style="left:21px;top:146px;color:#111"><div>samplenames</div></div>
<div class="code" style="left:242px;top:146px;color:#111"><div>"YMAZE.csv"</div></div>
<div class="a" style="left:0;top:163px;width:864px;height:19px;border-bottom:1px solid #dde1e4"></div>
<div class="code" style="left:21px;top:165px;color:#111"><div>save_path</div></div>
<div class="code" style="left:242px;top:165px;color:#111"><div>"C:\\Users\\chaji\\Desktop\\<i class="c c2">一</i><i class="c c2">湾</i>-<i class="c c2">小</i><i class="c c2">红</i><i class="c c2">书</i>\\<i class="c c2">热</i><i class="c c2">图</i>\\<i class="c c2">热</i><i class="c c2">图</i>-<i class="c c2">多</i><i class="c c2">实</i><i class="c c2">验</i>\\<i class="c c2">新</i><i class="c c2">物</i><i class="c c2">体</i>"</div></div>
<div class="a" style="left:0;top:182px;width:864px;height:19px;border-bottom:1px solid #dde1e4"></div>
<div class="code" style="left:21px;top:184px;color:#111"><div>smooth_win</div></div>
<div class="code" style="left:242px;top:184px;color:#111"><div>9</div></div>
<div class="a" style="left:0;top:201px;width:864px;height:19px;border-bottom:1px solid #dde1e4"></div>
<div class="code" style="left:21px;top:203px;color:#111"><div>speed</div></div>
<div class="code" style="left:242px;top:203px;color:#111"><div>num [1:1432] 1.48 1.32 1.41 1.99 2.29 ...</div></div>
<div class="a" style="left:0;top:220px;width:864px;height:19px;border-bottom:1px solid #dde1e4"></div>
<div class="code" style="left:21px;top:222px;color:#111"><div>speed_max</div></div>
<div class="code" style="left:242px;top:222px;color:#111"><div>6.97691428065123</div></div>
<div class="a" style="left:0;top:239px;width:864px;height:19px;border-bottom:1px solid #dde1e4"></div>
<div class="code" style="left:21px;top:241px;color:#111"><div>speed_min</div></div>
<div class="code" style="left:242px;top:241px;color:#111"><div>0.0344898038473764</div></div>
<div class="a" style="left:0;top:258px;width:864px;height:19px;border-bottom:1px solid #dde1e4"></div>
<div class="code" style="left:21px;top:260px;color:#111"><div>tail</div></div>
<div class="code" style="left:242px;top:260px;color:#111"><div>num [1:4] 0.291 0.126 0.318 0.318</div></div>
<div class="a" style="left:0;top:277px;width:864px;height:19px;border-bottom:1px solid #dde1e4"></div>
<div class="code" style="left:21px;top:279px;color:#111"><div>tailX</div></div>
<div class="code" style="left:242px;top:279px;color:#111"><div>num [1:4] 187 187 187 188</div></div>
<div class="a" style="left:0;top:296px;width:864px;height:19px;border-bottom:1px solid #dde1e4"></div>
<div class="code" style="left:21px;top:298px;color:#111"><div>tailY</div></div>
<div class="code" style="left:242px;top:298px;color:#111"><div>num [1:4] 329 329 329 329</div></div>
<div class="a" style="left:236px;top:0;width:1px;height:314px;background:#dde1e4"></div>
<div class="a" style="left:849px;top:0;width:16px;height:314px;background:#f1f1f1;opacity:.93"></div>
<div class="a" style="left:851px;top:151px;width:13px;height:145px;background:#c8c8c8;opacity:.9"></div>
<svg style="left:853px;top:7px" width="9" height="5" viewBox="0 0 9 5"><path d="M0 5L4.500 0 9 5z" fill="#a3a3a3"/></svg>
<svg style="left:853px;top:303px" width="9" height="5" viewBox="0 0 9 5"><path d="M0 0L4.500 5 9 0z" fill="#a3a3a3"/></svg>
</div>
<!-- ===== FILES PANE ===== -->
<div class="pane" style="left:1045px;top:472px;width:867px;height:260px"></div>
<div class="a" style="left:1046px;top:473px;width:865px;height:23px;background:#e4e5e7;border-bottom:1px solid #d6dadc"></div>
<div class="a" style="left:1046px;top:473px;width:42px;height:23px;background:#f4f8f9;border-right:1px solid #d6dadc;border-radius:3px 3px 0 0"></div>
<div class="t b" style="left:1055px;top:478px;transform:scaleX(0.835)">Files</div>
<div class="a" style="left:1088px;top:473px;width:45px;height:22px;background:#ebecee;border-right:1px solid #d6dadc;border-radius:3px 3px 0 0"></div>
<div class="t b" style="left:1097px;top:478px;transform:scaleX(0.9)">Plots</div>
<div class="a" style="left:1133px;top:473px;width:66px;height:22px;background:#ebecee;border-right:1px solid #d6dadc;border-radius:3px 3px 0 0"></div>
<div class="t b" style="left:1141.5px;top:478px;transform:scaleX(0.855)">Packages</div>
<div class="a" style="left:1199px;top:473px;width:43px;height:22px;background:#ebecee;border-right:1px solid #d6dadc;border-radius:3px 3px 0 0"></div>
<div class="t b" style="left:1208px;top:478px;transform:scaleX(0.92)">Help</div>
<div class="a" style="left:1242px;top:473px;width:55px;height:22px;background:#ebecee;border-right:1px solid #d6dadc;border-radius:3px 3px 0 0"></div>
<div class="t b" style="left:1251px;top:478px;transform:scaleX(0.9)">Viewer</div>
<div class="a" style="left:1297px;top:473px;width:84px;height:22px;background:#ebecee;border-right:1px solid #d6dadc;border-radius:3px 3px 0 0"></div>
<div class="t b" style="left:1306px;top:478px;transform:scaleX(0.9)">Presentation</div>
<svg style="left:1870px;top:480px" width="33" height="13" viewBox="0 0 33 13"><rect x=".6" y="6.600" width="13" height="5" rx=".8" fill="#f1f2f3" stroke="#848f96" stroke-width="1"/><path d="M.1 9V7.200a1.200 1.200 0 0 1 1.200-1.200h11.600a1.200 1.200 0 0 1 1.200 1.200V9z" fill="#848f96"/><rect x="18.600" y=".6" width="13" height="11" rx=".8" fill="none" stroke="#848f96" stroke-width="1"/><path d="M18.100 2.900V1.300a1.200 1.200 0 0 1 1.200-1.200h11.600a1.200 1.200 0 0 1 1.200 1.200V2.900z" fill="#848f96"/></svg>
<div class="a" style="left:1046px;top:496px;width:865px;height:23px;background:#f4f8f9;border-bottom:1px solid #d6dadc"></div>
<svg style="left:1052px;top:500px" width="19" height="15" viewBox="0 0 19 15"><path d="M4 1.500h5.500l1.500 1.500H18.500V14.500H4z" fill="#f0dc9a" stroke="#c9a93f" stroke-width=".8"/><path d="M4 5.500h14.500" stroke="#e2c772" stroke-width=".7"/><circle cx="5.500" cy="5.500" r="5.200" fill="#17a35c"/><path d="M5.500 2.500v6M2.500 5.500h6" stroke="#fff" stroke-width="1.900"/></svg>
<div class="t" style="left:1074px;top:502px;transform:scaleX(.93)">New Folder</div>
<div class="sep" style="left:1139px;top:500px;height:14px"></div>
<svg style="left:1146px;top:500px" width="18" height="15" viewBox="0 0 18 15"><rect x="6.500" y="3.500" width="11" height="11" fill="#fff" stroke="#e1e4e6"/><circle cx="5.500" cy="5.500" r="5.200" fill="#17a35c"/><path d="M5.500 2.500v6M2.500 5.500h6" stroke="#fff" stroke-width="1.900"/></svg>
<div class="t" style="left:1168px;top:502px;transform:scaleX(.885)">New File</div>
<div class="ar" style="left:1215px;top:507px;transform:scale(.85)"></div>
<div class="sep" style="left:1229px;top:500px;height:14px"></div>
<svg style="left:1236px;top:500px" width="18" height="15" viewBox="0 0 18 15"><rect x="6.500" y="3.500" width="11" height="11" fill="#fff" stroke="#e1e4e6"/><circle cx="5.500" cy="5.500" r="5.200" fill="#d63a3a"/><path d="M3.300 3.300l4.400 4.400M7.700 3.300L3.300 7.700" stroke="#fff" stroke-width="1.800"/></svg>
<div class="t" style="left:1258px;top:502px;transform:scaleX(.93)">Delete</div>
<svg style="left:1301px;top:501px" width="16" height="14" viewBox="0 0 16 14"><rect x=".5" y=".5" width="11" height="12" fill="#fff" stroke="#cfd3d7" stroke-width=".8"/><rect x="4.500" y="2.500" width="11" height="11" fill="#fff" stroke="#b9bec4" stroke-width=".8"/><path d="M6 7h4V4.800L13.500 8 10 11.200V9H6z" fill="#2b7fd0"/></svg>
<div class="t" style="left:1321px;top:502px;transform:scaleX(.865)">Rename</div>
<div class="sep" style="left:1370px;top:500px;height:14px"></div>
<svg style="left:1378px;top:499px" width="17" height="17" viewBox="0 0 16 16"><path d="M8 1.200l1.300.2.500 1.700 1.300.6 1.600-.8 1 .9-.8 1.600.6 1.300 1.700.5.1 1.400-1.700.5-.6 1.300.8 1.600-.9 1-1.600-.8-1.300.6-.5 1.700-1.400.1-.5-1.700-1.300-.6-1.600.8-1-.9.800-1.600-.6-1.300-1.700-.5-.1-1.400 1.700-.5.600-1.300-.8-1.600.9-1 1.600.8 1.300-.6.500-1.700z" fill="#5b9bd5" stroke="#3e7fbd" stroke-width=".5"/><circle cx="8" cy="8.200" r="2.600" fill="#dbe9f6" stroke="#3e7fbd" stroke-width=".5"/></svg>
<div class="t" style="left:1399px;top:502px;transform:scaleX(.93)">More</div>
<div class="ar" style="left:1431px;top:507px;transform:scale(.85)"></div>
<svg style="left:1884.7px;top:496.6px" width="36" height="24" viewBox="0 0 36 24"><path d="M20.600 4V10.300H14.300L16.450 8.160A3.600 3.600 0 1 0 16.560 12.910L19.470 15.360A7.400 7.400 0 1 1 19.120 5.460Z" fill="#e5ecf8" stroke="#c2c8d2" stroke-width=".8" stroke-linejoin="round"/></svg>
<div class="a" style="left:1046px;top:519px;width:865px;height:20px;background:#f4f8f9;border-bottom:1px solid #d6dadc"></div>
<div class="a" style="left:1050px;top:523px;width:13px;height:13px;background:#fff;border:1px solid #8c8c8c;border-radius:3px"></div>
<svg style="left:1068px;top:524px" width="6" height="10" viewBox="0 0 6 10"><path d="M1 .8l4 4.200-4 4.200" fill="none" stroke="#b0b4b9" stroke-width="1"/></svg>
<svg style="left:1094px;top:524px" width="6" height="10" viewBox="0 0 6 10"><path d="M1 .8l4 4.200-4 4.200" fill="none" stroke="#b0b4b9" stroke-width="1"/></svg>
<svg style="left:1137px;top:524px" width="6" height="10" viewBox="0 0 6 10"><path d="M1 .8l4 4.200-4 4.200" fill="none" stroke="#b0b4b9" stroke-width="1"/></svg>
<svg style="left:1177px;top:524px" width="6" height="10" viewBox="0 0 6 10"><path d="M1 .8l4 4.200-4 4.200" fill="none" stroke="#b0b4b9" stroke-width="1"/></svg>
<svg style="left:1235px;top:524px" width="6" height="10" viewBox="0 0 6 10"><path d="M1 .8l4 4.200-4 4.200" fill="none" stroke="#b0b4b9" stroke-width="1"/></svg>
<svg style="left:1311px;top:524px" width="6" height="10" viewBox="0 0 6 10"><path d="M1 .8l4 4.200-4 4.200" fill="none" stroke="#b0b4b9" stroke-width="1"/></svg>
<svg style="left:1350px;top:524px" width="6" height="10" viewBox="0 0 6 10"><path d="M1 .8l4 4.200-4 4.200" fill="none" stroke="#b0b4b9" stroke-width="1"/></svg>
<svg style="left:1427px;top:524px" width="6" height="10" viewBox="0 0 6 10"><path d="M1 .8l4 4.200-4 4.200" fill="none" stroke="#b0b4b9" stroke-width="1"/></svg>
<div class="t" style="left:1078px;top:522px;color:#4058bd;transform:scaleX(0.79)">C:</div>
<div class="t" style="left:1104px;top:522px;color:#4058bd;transform:scaleX(0.84)">Users</div>
<div class="t" style="left:1148px;top:522px;color:#4058bd;transform:scaleX(0.88)">chaji</div>
<div class="t" style="left:1187px;top:522px;color:#4058bd;transform:scaleX(0.914)">Desktop</div>
<div class="t" style="left:1245px;top:522px;color:#4058bd;transform:scaleX(0.9)"><i class="c c4">一</i><i class="c c4">湾</i>-<i class="c c4">小</i><i class="c c4">红</i><i class="c c4">书</i></div>
<div class="t" style="left:1321px;top:522px;color:#4058bd;transform:scaleX(0.9)"><i class="c c4">热</i><i class="c c4">图</i></div>
<div class="t" style="left:1360px;top:522px;color:#4058bd;transform:scaleX(0.9)"><i class="c c4">热</i><i class="c c4">图</i>-<i class="c c4">多</i><i class="c c4">实</i><i class="c c4">验</i></div>
<div class="t" style="left:1436px;top:522px;color:#4058bd;transform:scaleX(0.88)">Rcode_position_speed_heatmap(1)</div>
<div class="sep" style="left:1891px;top:519px;height:20px"></div>
<div class="t" style="left:1897px;top:523px;color:#555">...</div>
<div class="a" style="left:1046px;top:539px;width:865px;height:19px;background:#f4f8f9;border-bottom:1px solid #d6dadc"></div>
<div class="sep" style="left:1075px;top:539px;height:19px;background:#dde1e4"></div>
<div class="sep" style="left:1101px;top:539px;height:19px;background:#dde1e4"></div>
<div class="sep" style="left:1670px;top:539px;height:19px;background:#dde1e4"></div>
<div class="sep" style="left:1750px;top:539px;height:19px;background:#dde1e4"></div>
<svg style="left:1111px;top:545px" width="10" height="7" viewBox="0 0 10 7"><path d="M0 7L5 0l5 7z" fill="#777"/></svg>
<div class="t" style="left:1125px;top:542px;color:#444;transform:scaleX(.93)">Name</div>
<div class="t" style="left:1677px;top:542px;color:#444;transform:scaleX(.93)">Size</div>
<div class="t" style="left:1757px;top:542px;color:#444;transform:scaleX(.93)">Modified</div>
<div class="a" style="left:1046px;top:558px;width:865px;height:165px;background:#fff"></div>
<svg style="left:1082px;top:561px" width="15" height="13" viewBox="0 0 15 14"><path d="M5.500 0L0 6h3.500v7H14v-3.500H7.500V6H11z" fill="#17b26a"/></svg>
<div class="t" style="left:1105px;top:564px;color:#2b2399">..</div>
<div class="a" style="left:1057px;top:587px;width:13px;height:13px;background:#fff;border:1px solid #a9a9a9;border-radius:3px"></div>
<svg style="left:1082px;top:583px" width="16" height="16" viewBox="0 0 16 16"><rect x=".5" y=".5" width="15" height="15" fill="#fff" stroke="#b5b9be" stroke-width=".8"/><path d="M.5 4.500h15M.5 7.500h15M.5 10.500h15M.5 13.500h15M4.500 3v13M8.500 3v13M12.500 3v13" stroke="#cfd3d8" stroke-width=".7"/><rect x="1" y="1" width="14" height="2.500" fill="#e8ebee"/></svg>
<div class="t" style="left:1105px;top:587px;color:#2b2399;font-size:12.5px;transform:scaleX(0.89)">ctrl_xy.csv</div>
<div class="t" style="left:1674px;top:587px;color:#222;font-size:12.5px;transform:scaleX(.87)">285.2 KB</div>
<div class="t" style="left:1754px;top:587px;color:#222;font-size:12.5px;transform:scaleX(.92)">Aug 18, 2025, 1:56 PM</div>
<div class="a" style="left:1057px;top:610px;width:13px;height:13px;background:#fff;border:1px solid #a9a9a9;border-radius:3px"></div>
<svg style="left:1082px;top:606px" width="16" height="16" viewBox="0 0 16 16"><rect x=".5" y=".5" width="15" height="15" fill="#fff" stroke="#b5b9be" stroke-width=".8"/><path d="M.5 4.500h15M.5 7.500h15M.5 10.500h15M.5 13.500h15M4.500 3v13M8.500 3v13M12.500 3v13" stroke="#cfd3d8" stroke-width=".7"/><rect x="1" y="1" width="14" height="2.500" fill="#e8ebee"/></svg>
<div class="t" style="left:1105px;top:610px;color:#2b2399;font-size:12.5px;transform:scaleX(0.913)">model_xy.csv</div>
<div class="t" style="left:1674px;top:610px;color:#222;font-size:12.5px;transform:scaleX(.87)">282 KB</div>
<div class="t" style="left:1754px;top:610px;color:#222;font-size:12.5px;transform:scaleX(.92)">Aug 18, 2025, 1:57 PM</div>
<div class="a" style="left:1057px;top:633px;width:13px;height:13px;background:#fff;border:1px solid #a9a9a9;border-radius:3px"></div>
<svg style="left:1082px;top:629px" width="16" height="16" viewBox="0 0 16 16"><rect x=".5" y=".5" width="15" height="14" fill="#fff" stroke="#c9cdd2" stroke-width=".8"/><rect x="1.500" y="1.500" width="13" height="6.500" fill="#4d9be0"/><path d="M2.500 3.500h5M8.500 5.500h5" stroke="#e8f3fc" stroke-width="1.300"/><rect x="1.500" y="8" width="13" height="4.500" fill="#f0c64b"/><path d="M1.500 9.500c4-1.200 9-1.200 13 0" stroke="#fdf3c8" stroke-width=".9" fill="none"/></svg>
<div class="t" style="left:1105px;top:633px;color:#2b2399;font-size:12.5px;transform:scaleX(0.95)">position_heatmap.png</div>
<div class="t" style="left:1674px;top:633px;color:#222;font-size:12.5px;transform:scaleX(.87)">366.6 KB</div>
<div class="t" style="left:1754px;top:633px;color:#222;font-size:12.5px;transform:scaleX(.92)">Aug 29, 2025, 6:19 PM</div>
<div class="a" style="left:1057px;top:656px;width:13px;height:13px;background:#fff;border:1px solid #a9a9a9;border-radius:3px"></div>
<svg style="left:1082px;top:652px" width="16" height="16" viewBox="0 0 16 16"><rect x=".5" y=".5" width="15" height="14" fill="#fff" stroke="#c9cdd2" stroke-width=".8"/><rect x="1.500" y="1.500" width="13" height="6.500" fill="#4d9be0"/><path d="M2.500 3.500h5M8.500 5.500h5" stroke="#e8f3fc" stroke-width="1.300"/><rect x="1.500" y="8" width="13" height="4.500" fill="#f0c64b"/><path d="M1.500 9.500c4-1.200 9-1.200 13 0" stroke="#fdf3c8" stroke-width=".9" fill="none"/></svg>
<div class="t" style="left:1105px;top:656px;color:#2b2399;font-size:12.5px;transform:scaleX(0.93)">speed_heatmap.png</div>
<div class="t" style="left:1674px;top:656px;color:#222;font-size:12.5px;transform:scaleX(.87)">966.1 KB</div>
<div class="t" style="left:1754px;top:656px;color:#222;font-size:12.5px;transform:scaleX(.92)">Aug 29, 2025, 6:19 PM</div>
<div class="a" style="left:1057px;top:679px;width:13px;height:13px;background:#fff;border:1px solid #a9a9a9;border-radius:3px"></div>
<svg style="left:1082px;top:674px" width="16" height="16" viewBox="0 0 16 16"><path d="M2.500.700h7.600l4 4v9.800H2.500z" fill="#fff" stroke="#b9bdc2" stroke-width=".8"/><path d="M10.100.700v4h4" fill="none" stroke="#b9bdc2" stroke-width=".8"/><circle cx="4.400" cy="7" r="4.100" fill="#3f7fc4"/><text x="2.300" y="9.300" font-family="Liberation Sans" font-weight="700" font-size="6.500" fill="#fff">R</text></svg>
<div class="t" style="left:1105px;top:679px;color:#2b2399;font-size:12.5px;transform:scaleX(0.924)">speed_position_heatmap.R</div>
<div class="t" style="left:1674px;top:679px;color:#222;font-size:12.5px;transform:scaleX(.87)">5.3 KB</div>
<div class="t" style="left:1754px;top:679px;color:#222;font-size:12.5px;transform:scaleX(.92)">Aug 29, 2025, 6:22 PM</div>


<!-- ===== annotations ===== -->
<svg style="left:0;top:0" width="1914" height="723" viewBox="0 0 1914 723" fill="none">
<rect x="58" y="128" width="856" height="352" rx="1.500" stroke="#f85053" stroke-width="4"/>
<rect x="761.500" y="69.300" width="84.500" height="66.500" rx="2" stroke="#f85053" stroke-width="4"/>
<path d="M865.800 85.900L892 75.200L890.600 81.900L1298 82.100V83.800L1044 86.600L960 88.500L890.600 90.100L892 96z" fill="#f85053"/>
<rect x="1055" y="629.200" width="390.800" height="48.600" rx="1.500" stroke="#19a9f2" stroke-width="4"/>
</svg>

</body>
</html>
